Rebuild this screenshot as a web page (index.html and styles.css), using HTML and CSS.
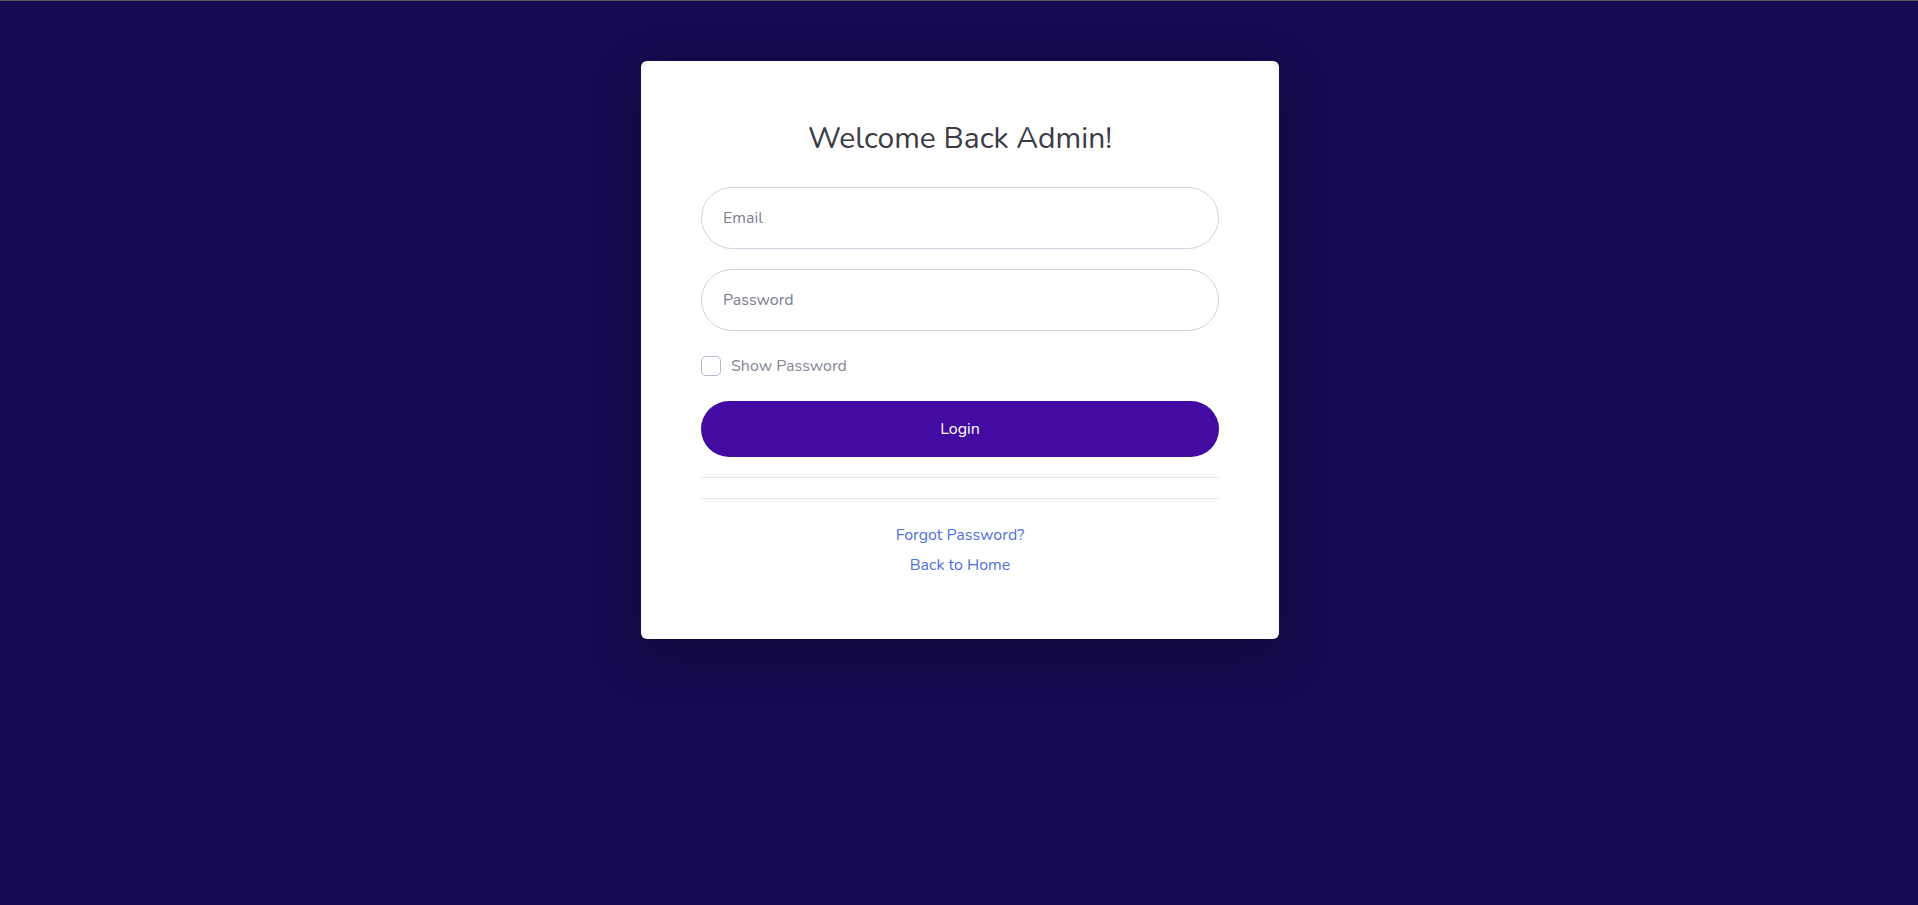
FILE: index.html
```html
<!DOCTYPE html>
<html lang="en">
<head>
<meta charset="utf-8">
<title>Admin Login</title>
<link rel="stylesheet" href="styles.css">
</head>
<body>
<main class="page">
  <div class="card">
    <h1 class="title">Welcome Back Admin!</h1>
    <form class="form">
      <input class="field" type="email" placeholder="Email">
      <input class="field" type="password" placeholder="Password">
      <label class="check">
        <input class="check-box" type="checkbox">
        <span class="check-label">Show Password</span>
      </label>
      <button class="btn" type="button">Login</button>
    </form>
    <hr class="rule rule-first">
    <hr class="rule rule-second">
    <div class="links">
      <a class="link" href="#">Forgot Password?</a>
      <a class="link" href="#">Back to Home</a>
    </div>
  </div>
</main>
</body>
</html>
```
FILE: styles.css
```css
* { box-sizing: border-box; }
html, body { margin: 0; padding: 0; }
body {
  background: #140a4f;
  border-top: 1px solid #5a5a5a;
  min-height: 905px;
  font-family: Nunito, "Lato", "Noto Sans", sans-serif;
  color: #858796;
}
.page {
  display: flex;
  justify-content: center;
  padding-top: 60px;
}
.card {
  width: 638px;
  margin-left: 2px;
  background: #fff;
  border-radius: 6px;
  box-shadow: 0 16px 48px rgba(0, 0, 0, 0.25);
  padding: 60px 60px 62px;
}
.title {
  margin: 0 0 30px;
  font-size: 30px;
  line-height: 36px;
  font-weight: 400;
  text-align: center;
  color: #3a3b45;
}
.form {
  display: flex;
  flex-direction: column;
}
.field {
  height: 62px;
  width: 100%;
  border: 1px solid #d1d3e2;
  border-radius: 31px;
  padding: 0 21px;
  font-family: inherit;
  font-size: 16px;
  color: #6e707e;
  outline: none;
  margin-bottom: 20px;
}
.field:last-of-type { margin-bottom: 0; }
.field::placeholder { color: #7b7d8f; }
.check {
  display: flex;
  align-items: center;
  gap: 10px;
  height: 20px;
  margin: 25px 0 25px;
}
.check-box {
  appearance: none;
  -webkit-appearance: none;
  margin: 0;
  width: 20px;
  height: 20px;
  border: 1px solid #b7b9cc;
  border-radius: 5px;
  background: #fff;
}
.check-label {
  font-size: 16px;
  color: #858796;
}
.btn {
  height: 56px;
  width: 100%;
  border: none;
  border-radius: 28px;
  background: #420ba1;
  color: #fff;
  font-family: inherit;
  font-size: 16px;
}
.rule {
  border: 0;
  border-top: 1px solid #e3e6f0;
  margin: 0;
}
.rule-first { margin-top: 20px; }
.rule-second { margin-top: 20px; }
.links {
  display: flex;
  flex-direction: column;
  align-items: center;
  gap: 6px;
  margin-top: 24px;
}
.link {
  font-size: 16px;
  line-height: 24px;
  color: #5270e0;
  text-decoration: none;
}
```
